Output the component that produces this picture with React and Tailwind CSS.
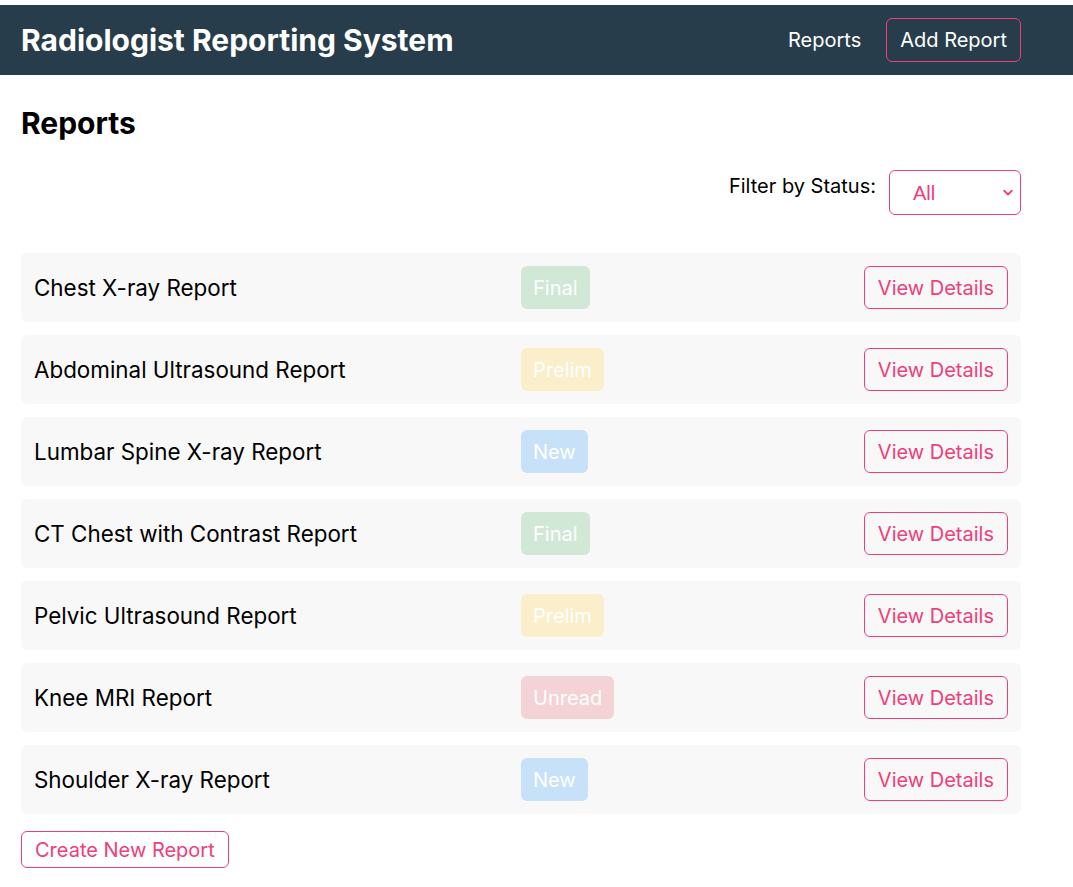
import { useState } from "react";

const reports = [
  { id: 1, name: "Chest X-ray Report", status: "Final" },
  { id: 2, name: "Abdominal Ultrasound Report", status: "Prelim" },
  { id: 3, name: "Lumbar Spine X-ray Report", status: "New" },
  { id: 4, name: "CT Chest with Contrast Report", status: "Final" },
  { id: 5, name: "Pelvic Ultrasound Report", status: "Prelim" },
  { id: 6, name: "Knee MRI Report", status: "Unread" },
  { id: 7, name: "Shoulder X-ray Report", status: "New" },
];

const badgeColors = {
  Final: "bg-[#d1e8d6]",
  Prelim: "bg-[#faeecb]",
  New: "bg-[#c7e1f8]",
  Unread: "bg-[#f3d3d6]",
};

export default function App() {
  const [filter, setFilter] = useState("All");
  const shown = filter === "All" ? reports : reports.filter((r) => r.status === filter);

  return (
    <div className="min-h-screen bg-white pt-[5px] font-['Inter',sans-serif] text-black">
      <header className="bg-[#283d4b] h-[70px] flex items-center">
        <div className="ml-[21px] w-[1000px] flex items-center justify-between">
          <h1 className="text-[30px] font-bold text-white">
            Radiologist Reporting System
          </h1>
          <nav className="flex items-center">
            <a className="text-white text-[20px] mr-[25px]">Reports</a>
            <button className="h-[44px] px-[13px] border border-[#ec407a] rounded-md text-white text-[20px]">
              Add Report
            </button>
          </nav>
        </div>
      </header>

      <main className="ml-[21px] w-[1000px]">
        <h2 className="text-[30px] font-bold mt-[30px] leading-[36px]">Reports</h2>

        <div className="flex justify-end items-start mt-[29px]">
          <label className="text-[20px] mt-[1px] mr-[13px]">Filter by Status:</label>
          <div className="relative">
            <select
              value={filter}
              onChange={(e) => setFilter(e.target.value)}
              className="appearance-none w-[132px] h-[45px] border border-[#ec407a] rounded-md pl-[23px] text-[20px] text-[#ec407a] bg-white font-['Liberation_Sans',sans-serif]"
            >
              <option>All</option>
              <option>Final</option>
              <option>Prelim</option>
              <option>New</option>
              <option>Unread</option>
            </select>
            <svg
              className="absolute right-[7px] top-[17px] pointer-events-none"
              width="12"
              height="12"
              viewBox="0 0 16 16"
              fill="none"
              stroke="#ec407a"
              strokeWidth="2.5"
              strokeLinecap="round"
              strokeLinejoin="round"
            >
              <path d="M3 5l5 5 5-5" />
            </svg>
          </div>
        </div>

        <div className="flex flex-col gap-[13px] mt-[38px]">
          {shown.map((r) => (
            <div
              key={r.id}
              className="h-[69px] bg-[#f8f8f8] rounded-md flex items-center px-[13px]"
            >
              <div className="w-[487px] text-[22.4px]">{r.name}</div>
              <span
                className={`${badgeColors[r.status]} h-[43px] flex items-center px-[12px] rounded-md text-white text-[20px]`}
              >
                {r.status}
              </span>
              <button className="ml-auto h-[43px] px-[13px] border border-[#ec407a] rounded-md text-[#ec407a] text-[20px] bg-transparent">
                View Details
              </button>
            </div>
          ))}
        </div>

        <button className="mt-[17px] h-[37px] px-[13px] border border-[#ec407a] rounded-md text-[#ec407a] text-[20px]">
          Create New Report
        </button>
      </main>
    </div>
  );
}
